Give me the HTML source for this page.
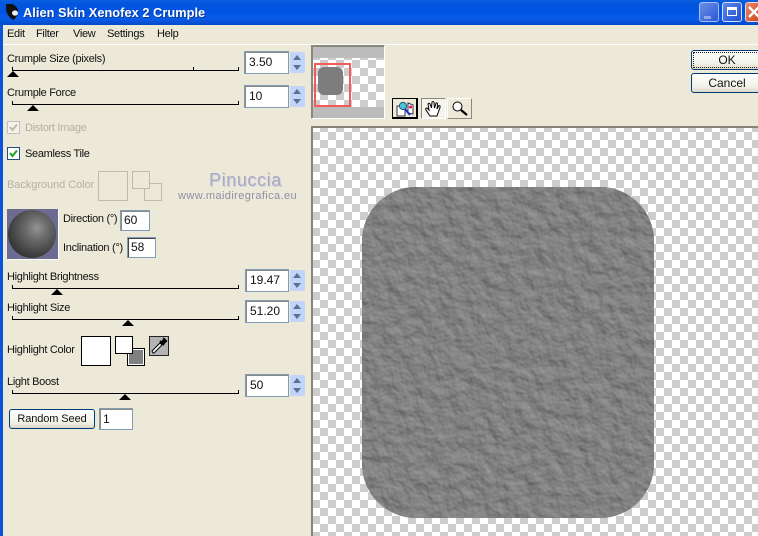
<!DOCTYPE html>
<html><head><meta charset="utf-8">
<style>
html,body{margin:0;padding:0}
body{width:758px;height:536px;overflow:hidden;position:relative;background:#ece9d8;font-family:"Liberation Sans",sans-serif;font-size:11px;letter-spacing:-.3px;color:#111}
.a{position:absolute}
.t{position:absolute;white-space:nowrap;line-height:13px}
.dis{color:#b3b1a6}
.in{position:absolute;box-sizing:border-box;width:45px;height:23px;background:#fff;border:1px solid #7f9db9;box-shadow:inset 1px 1px 0 #8a8a80;font-size:12px;letter-spacing:0;line-height:21px;padding-left:4px}
.sp{position:absolute;left:290px;width:15px;height:21px;background:#c3d4fa;border-radius:2px}
.sp:before{content:"";position:absolute;left:3px;top:3px;border:4px solid transparent;border-top:0;border-bottom:5px solid #5c7096}
.sp:after{content:"";position:absolute;left:3px;top:13px;border:4px solid transparent;border-bottom:0;border-top:5px solid #5c7096}
.line{position:absolute;left:12px;width:227px;height:4px;border:1px solid #000;border-top:0;border-bottom:0;box-sizing:border-box}
.line:after{content:"";position:absolute;left:-1px;right:-1px;bottom:0;height:1px;background:#000}
.th{position:absolute;width:0;height:0;border-left:6px solid transparent;border-right:6px solid transparent;border-bottom:6px solid #000}
.btn{position:absolute;box-sizing:border-box;border:1px solid #003c74;border-radius:3px;background:linear-gradient(#fff,#f2f1e8 70%,#dcd8c8);text-align:center;font-size:12px;letter-spacing:0}
.sw{position:absolute;box-sizing:border-box;border:1px solid #bdbbb0}
</style></head><body>
<div class="a" style="left:0;top:0;width:758px;height:25px;background:linear-gradient(#0a5fe0 0,#0256dc 12%,#0054e3 50%,#0a5ce8 75%,#0349c8 100%)"></div>
<div class="a" style="left:0;top:25px;width:3px;height:511px;background:#0a54dc"></div>
<svg class="a" style="left:4px;top:3px" width="16" height="18" viewBox="0 0 16 18"><path d="M2 1 L8 1 Q15 4 14 10 Q12 16 9 17 Q3 13 2 7Z" fill="#111"/><ellipse cx="11" cy="10" rx="3" ry="2.6" fill="#eee"/></svg>
<div class="t" style="left:23px;top:5px;color:#fff;font-weight:bold;font-size:12.8px;line-height:15px;letter-spacing:.03px;text-shadow:1px 1px 0 #0a3a9c">Alien Skin Xenofex 2 Crumple</div>
<div class="a" style="left:699px;top:2px;width:20px;height:20px;box-sizing:border-box;border:1px solid #a9c0ef;border-radius:3px;background:linear-gradient(135deg,#6b8fe6,#2a57d6)"><div class="a" style="left:4px;top:13px;width:7px;height:3px;background:#8fa8e8"></div></div>
<div class="a" style="left:722px;top:2px;width:20px;height:20px;box-sizing:border-box;border:1px solid #d7e2f8;border-radius:3px;background:linear-gradient(135deg,#5f86ea,#1e4fd0)"><div class="a" style="left:4px;top:4px;width:10px;height:9px;box-sizing:border-box;border:1px solid #fff;border-top-width:3px"></div></div>
<div class="a" style="left:745px;top:2px;width:20px;height:20px;box-sizing:border-box;border:1px solid #e8d8d0;border-radius:3px;background:linear-gradient(135deg,#e88a6a,#c83d1a)"></div>
<svg class="a" style="left:746px;top:4px" width="12" height="16"><path d="M3 3 L13 13 M13 3 L3 13" stroke="#fff" stroke-width="2.4"/></svg>

<div class="t" style="left:7px;top:28px">Edit</div>
<div class="t" style="left:36px;top:28px">Filter</div>
<div class="t" style="left:73px;top:28px">View</div>
<div class="t" style="left:107px;top:28px">Settings</div>
<div class="t" style="left:157px;top:28px">Help</div>
<div class="a" style="left:3px;top:44px;width:755px;height:1px;background:#fff"></div>

<div class="t" style="left:7px;top:53px">Crumple Size (pixels)</div>
<div class="line" style="top:67px"></div><div class="a" style="left:193px;top:67px;width:1px;height:3px;background:#000"></div>
<div class="th" style="left:7px;top:71px"></div>
<div class="in" style="left:244px;top:51px">3.50</div><div class="sp" style="top:52px"></div>

<div class="t" style="left:7px;top:87px">Crumple Force</div>
<div class="line" style="top:101px"></div>
<div class="th" style="left:27px;top:105px"></div>
<div class="in" style="left:244px;top:85px">10</div><div class="sp" style="top:86px"></div>

<div class="a" style="left:7px;top:121px;width:13px;height:13px;box-sizing:border-box;border:1px solid #c4c2b8;background:#f4f3ec"></div>
<svg class="a" style="left:7px;top:121px" width="13" height="13"><path d="M3 6 L5.5 9 L10 3.5" fill="none" stroke="#bdbbb0" stroke-width="2"/></svg>
<div class="t dis" style="left:25px;top:122px">Distort Image</div>
<div class="a" style="left:7px;top:147px;width:13px;height:13px;box-sizing:border-box;border:1px solid #1c5180;background:#fff"></div>
<svg class="a" style="left:7px;top:147px" width="13" height="13"><path d="M3 6 L5.5 9 L10 3.5" fill="none" stroke="#21a121" stroke-width="2"/></svg>
<div class="t" style="left:25px;top:148px">Seamless Tile</div>

<div class="t dis" style="left:7px;top:179px;letter-spacing:-.05px">Background Color</div>
<div class="sw" style="left:98px;top:171px;width:30px;height:30px"></div>
<div class="sw" style="left:144px;top:183px;width:18px;height:18px;background:#ece9d8"></div>
<div class="sw" style="left:132px;top:171px;width:18px;height:18px;background:#ece9d8"></div>
<div class="t" style="left:209px;top:169px;color:#a9a9c6;font-size:18px;line-height:22px;letter-spacing:.6px;text-shadow:1px 1px 0 #d0d0dc">Pinuccia</div>
<div class="t" style="left:178px;top:190px;color:#8f8fa8;font-size:11px;letter-spacing:.4px">www.maidiregrafica.eu</div>

<div class="a" style="left:7px;top:209px;width:51px;height:50px;background:#6c6c92;box-shadow:1px 1px 0 #fff"></div>
<div class="a" style="left:8px;top:210px;width:48px;height:48px;border-radius:50%;background:radial-gradient(circle at 60% 38%,#939393 0,#6c6c6c 26%,#444 60%,#1c1c1c 100%)"></div>
<div class="t" style="left:63px;top:213px">Direction (°)</div>
<div class="in" style="left:120px;top:210px;width:30px;height:21px;line-height:19px;padding-left:3px">60</div>
<div class="t" style="left:63px;top:242px">Inclination (°)</div>
<div class="in" style="left:127px;top:237px;width:29px;height:21px;line-height:19px;padding-left:3px;box-shadow:inset 1px 1px 0 #444">58</div>

<div class="t" style="left:7px;top:271px">Highlight Brightness</div>
<div class="line" style="top:285px"></div>
<div class="th" style="left:51px;top:289px"></div>
<div class="in" style="left:245px;top:269px;width:44px">19.47</div><div class="sp" style="top:270px"></div>

<div class="t" style="left:7px;top:302px">Highlight Size</div>
<div class="line" style="top:316px"></div>
<div class="th" style="left:122px;top:320px"></div>
<div class="in" style="left:245px;top:300px;width:44px">51.20</div><div class="sp" style="top:301px"></div>

<div class="t" style="left:7px;top:344px">Highlight Color</div>
<div class="a" style="left:81px;top:336px;width:30px;height:30px;box-sizing:border-box;border:1px solid #000;background:#fff"></div>
<div class="a" style="left:127px;top:348px;width:18px;height:18px;box-sizing:border-box;border:1px solid #000;background:#808080;box-shadow:inset 0 0 0 1px #fff"></div>
<div class="a" style="left:115px;top:336px;width:18px;height:18px;box-sizing:border-box;border:1px solid #000;background:#fff"></div>
<div class="a" style="left:149px;top:336px;width:20px;height:20px;box-sizing:border-box;border:1px solid #222;background:#b4b4b4"></div>
<svg class="a" style="left:149px;top:336px" width="20" height="20"><path d="M4 17 L3 15 L11 7 L13 9 L5 17Z" fill="#fff" stroke="#000"/><path d="M11 5 L15 9 M13 7 L15 3 L17 5 L14 8" stroke="#000" stroke-width="2" fill="#000"/></svg>

<div class="t" style="left:7px;top:376px">Light Boost</div>
<div class="line" style="top:390px"></div>
<div class="th" style="left:119px;top:394px"></div>
<div class="in" style="left:245px;top:374px;width:44px">50</div><div class="sp" style="top:375px"></div>

<div class="btn" style="left:9px;top:409px;width:86px;height:20px;line-height:18px;font-size:11px;letter-spacing:-.1px">Random Seed</div>
<div class="in" style="left:99px;top:408px;width:34px;height:22px;line-height:20px;padding-left:3px">1</div>

<!-- preview -->
<div class="a" style="left:311px;top:45px;width:74px;height:74px;box-sizing:border-box;border:1px solid;border-color:#8a887c #fff #fff #8a887c;background:#bcbcbc;box-shadow:inset 1px 1px 0 #8a887c"></div>
<div class="a" style="left:313px;top:58px;width:71px;height:49px;background-color:#fff;background-image:repeating-conic-gradient(#cdcdcd 0 25%,#fff 0 50%);background-size:16px 16px;background-position:-1px 2px"></div>
<div class="a" style="left:314px;top:63px;width:37px;height:44px;box-sizing:border-box;border:2px solid #f55a5a"></div>
<div class="a" style="left:318px;top:67px;width:25px;height:28px;background:#7d7d7d;border-radius:6px"></div>

<div class="a" style="left:392px;top:98px;width:26px;height:21px;box-sizing:border-box;border:1px solid #000;border-right-width:2px;border-bottom-width:2px;background:#ece9d8"></div>
<svg class="a" style="left:396px;top:101px" width="20" height="16"><path d="M1 5h6l2 2v8H1z" fill="#fff" stroke="#334"/><path d="M12 2l5 2v9l-5 -1z" fill="#fff" stroke="#334"/><circle cx="7" cy="5" r="3.6" fill="#4cc4d8" stroke="#257"/><path d="M9 8l5 6" stroke="#1a2fd0" stroke-width="2"/><circle cx="14.500" cy="6" r="1.500" fill="#e01050"/></svg>
<div class="a" style="left:421px;top:98px;width:25px;height:21px;box-sizing:border-box;border:1px solid;border-color:#8a887c #fff #fff #8a887c;background:#f4f3ec"></div>
<svg class="a" style="left:424px;top:100px" width="20" height="18"><path d="M6 16 Q4 13 2 10 Q1 8 3 8 L5 10 L4 4 Q5 2.500 6 4 L7.500 8 L8 2 Q9.500 1 10 2.500 L10.500 8 L12 3 Q13.500 2.500 13.500 4 L13 9 L15 5.500 Q16.500 5.500 16 7.500 L14 13 L13 16Z" fill="#fff" stroke="#000"/></svg>
<div class="a" style="left:447px;top:98px;width:25px;height:21px;box-sizing:border-box;border:1px solid;border-color:#fff #8a887c #8a887c #fff;background:#ece9d8"></div>
<svg class="a" style="left:451px;top:100px" width="18" height="17"><circle cx="6.500" cy="6.500" r="4.500" fill="#fff" stroke="#000"/><path d="M10 10l6 5" stroke="#000" stroke-width="2.200"/></svg>

<!-- main canvas -->
<div class="a" style="left:311px;top:126px;width:447px;height:410px;border-top:2px solid #85837a;border-left:2px solid #85837a;box-sizing:border-box;background-color:#fff;background-image:repeating-conic-gradient(#cdcdcd 0 25%,#fff 0 50%);background-size:16px 16px;background-position:-1px -4px"></div>
<svg class="a" style="left:362px;top:187px" width="292" height="331" viewBox="0 0 292 331">
<defs>
<filter id="cr" x="0" y="0" width="100%" height="100%" color-interpolation-filters="sRGB">
<feTurbulence type="fractalNoise" baseFrequency="0.07" numOctaves="3" seed="11" result="n"/>
<feDiffuseLighting in="n" surfaceScale="1.5" diffuseConstant="1" lighting-color="#999999"><feDistantLight azimuth="300" elevation="58"/></feDiffuseLighting>
</filter>
<clipPath id="c"><rect x="0" y="0" width="292" height="331" rx="54" ry="54"/></clipPath>
</defs>
<rect x="0" y="0" width="292" height="331" rx="54" ry="54" fill="#808080"/>
<g clip-path="url(#c)"><rect width="292" height="331" filter="url(#cr)"/></g>
</svg>

<div class="btn" style="left:691px;top:50px;width:80px;height:20px;line-height:18px;padding-right:8px">OK</div>
<div class="a" style="left:693px;top:52px;width:76px;height:16px;box-sizing:border-box;border:1px dotted #222"></div>
<div class="btn" style="left:691px;top:73px;width:80px;height:20px;line-height:18px;padding-right:8px">Cancel</div>
</body></html>
